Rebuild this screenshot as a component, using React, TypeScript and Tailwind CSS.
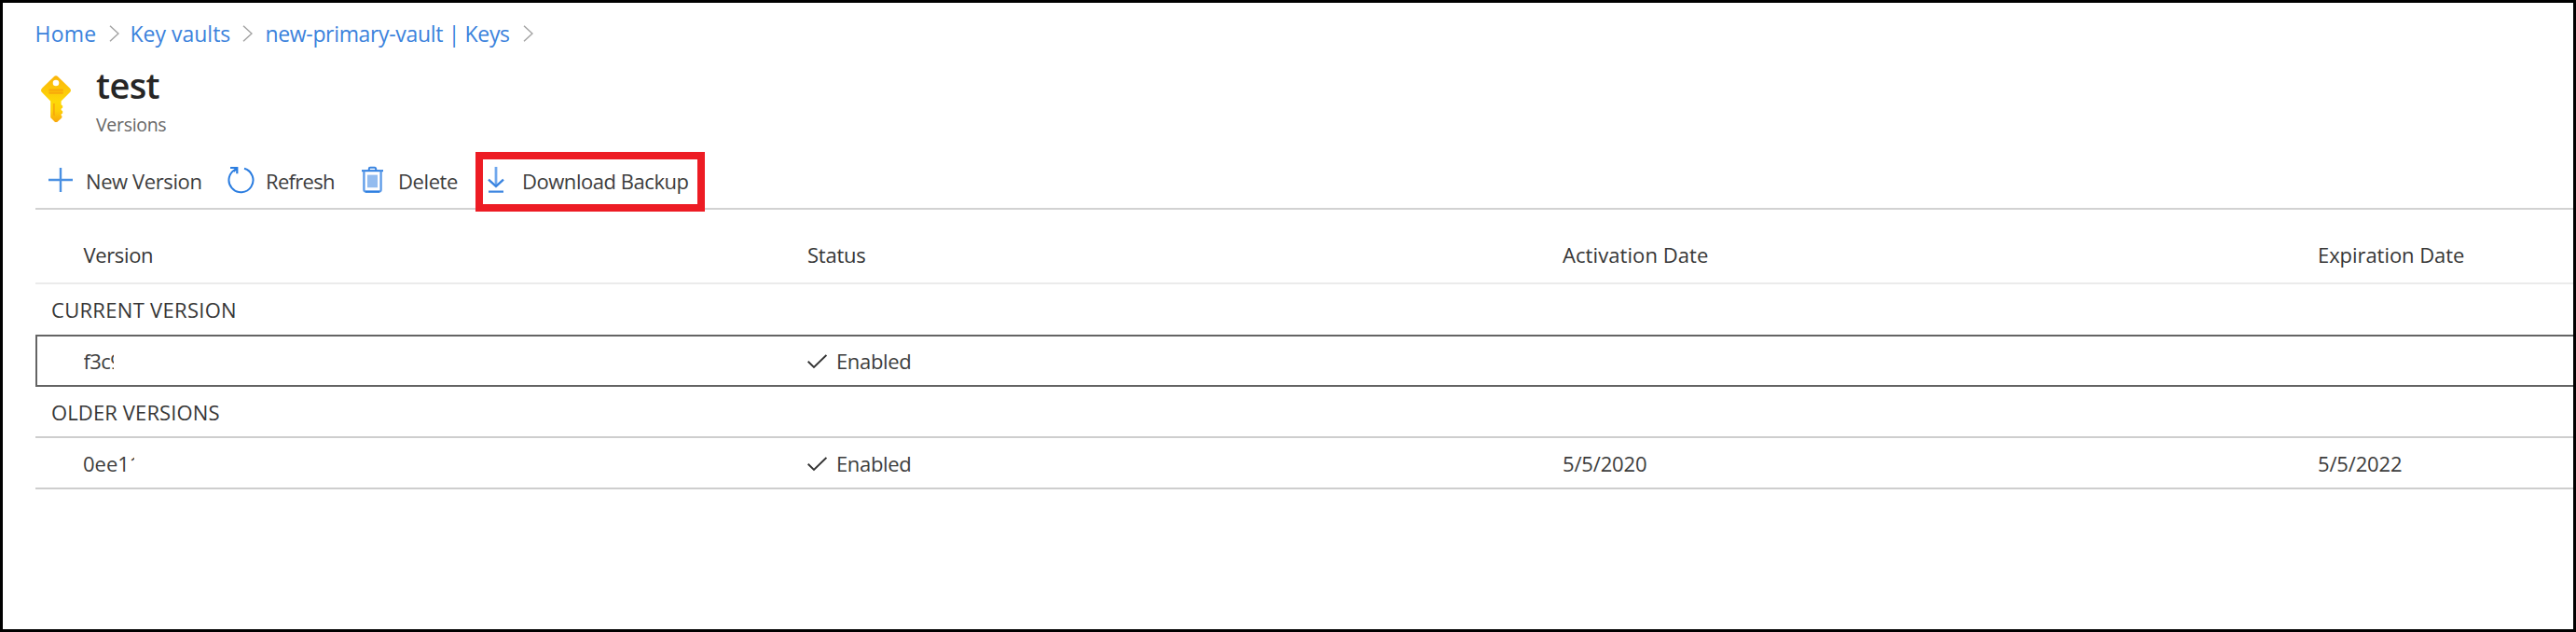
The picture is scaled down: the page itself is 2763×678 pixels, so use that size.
import type { ReactNode } from "react";

function Chevron({ className }: { className: string }) {
  return (
    <svg className={`h-[18px] w-[11px] shrink-0 ${className}`} viewBox="0 0 11 18" fill="none" stroke="#a3a3a3" strokeWidth="1.5">
      <path d="M1 .8 10 9 1 17.2" />
    </svg>
  );
}

function KeyIcon() {
  return (
    <svg className="h-[50px] w-[32px] shrink-0" viewBox="0 0 32 50">
      <defs>
        <linearGradient id="keyFill" x1="0" y1="0" x2="0" y2="1">
          <stop offset="0" stopColor="#fbb50a" />
          <stop offset=".55" stopColor="#fdd808" />
          <stop offset=".75" stopColor="#fdcf08" />
          <stop offset="1" stopColor="#f8a60c" />
        </linearGradient>
      </defs>
      <path
        fill="url(#keyFill)"
        d="M13.6 1.4a3.4 3.4 0 0 1 4.8 0L30.8 13.6a3.2 3.2 0 0 1 0 4.6L21.6 27.6v3.6l1.6 1.2v2.2l-1.6 1.2v1.2l1.6 1.2v2.2l-1.6 1.2v1.2l1 1-.4 1.8-5 4.4a1.6 1.6 0 0 1-2.2 0l-4.2-4.2a2 2 0 0 1-.6-1.4V27.6L1.2 18.2a3.2 3.2 0 0 1 0-4.6Z"
      />
      <circle cx="16" cy="8" r="3.3" fill="#fff" />
      <rect x="8.3" y="14.4" width="15.6" height="2.4" rx=".8" fill="#f8a90b" />
      <rect x="8.3" y="17.6" width="15.6" height="2.2" rx=".8" fill="#f8a90b" />
      <path d="M13.2 30v12.4l1.4 1.2V30Z" fill="#f5a10c" />
    </svg>
  );
}

function PlusIcon() {
  return (
    <svg className="h-[28px] w-[27px] shrink-0" viewBox="0 0 27 28" fill="none" stroke="#4a90e2" strokeWidth="2.4">
      <path d="M14 1v26M1 14h26" />
    </svg>
  );
}

function RefreshIcon() {
  return (
    <svg className="h-[30px] w-[29px] shrink-0" viewBox="0 0 29 30" fill="none" stroke="#2b7de0" strokeWidth="2">
      <path d="M18 2.7A13 13 0 1 1 9.3 3.3" />
      <path d="M3 2H10.3V8.3M10 2.4 6.6 6" strokeWidth="2.2" />
    </svg>
  );
}

function TrashIcon() {
  return (
    <svg className="h-[30px] w-[23px] shrink-0" viewBox="0 0 23 30" fill="none">
      <path d="M7.8 4.6V3.2A1.4 1.4 0 0 1 9.2 1.8h4.6a1.4 1.4 0 0 1 1.4 1.4v1.4" stroke="#3a84e0" strokeWidth="2" />
      <path d="M0 5.2H23" stroke="#2b7de0" strokeWidth="2" />
      <path d="M2.4 5.4V25.6a2 2 0 0 0 2 2H18.6a2 2 0 0 0 2-2V5.4" stroke="#5b9ae8" strokeWidth="2.3" />
      <path d="M4 27.6H19" stroke="#2b7de0" strokeWidth="2" />
      <rect x="6" y="9.6" width="11" height="13.6" fill="#93bcef" />
    </svg>
  );
}

function DownloadIcon() {
  return (
    <svg className="h-[30px] w-[18px] shrink-0" viewBox="0 0 18 30" fill="none" stroke="#3a84e0">
      <path d="M9 1V22" stroke="#6fa7ec" strokeWidth="2.8" />
      <path d="M1 14.6 9 21.8 17 14.6" strokeWidth="2.4" />
      <path d="M1 27.6H17" strokeWidth="2.2" />
    </svg>
  );
}

function Enabled() {
  return (
    <div className="flex items-center">
      <svg className="mr-[10px] h-[16px] w-[21px] shrink-0" viewBox="0 0 21 16" fill="none" stroke="#333" strokeWidth="1.9">
        <path d="M.7 7.8 7 14 20.4 1" />
      </svg>
      <span className="tracking-[-0.35px]">Enabled</span>
    </div>
  );
}

function Row({ children, className = "" }: { children: ReactNode; className?: string }) {
  return <div className={`grid grid-cols-[828px_810px_810px_1fr] items-center ${className}`}>{children}</div>;
}

export default function App() {
  return (
    <div className="flex h-[678px] w-[2763px] flex-col overflow-hidden border-[3px] border-black bg-white font-['Open_Sans','Noto_Sans',sans-serif] text-[22px] whitespace-nowrap text-[#3d3d3d]">
      <nav className="flex h-[65px] items-center pt-px pl-[34.5px] text-[23px] text-[#3b82dc]">
        <a className="w-[65px] tracking-[0.2px]">Home</a>
        <Chevron className="ml-[14px]" />
        <a className="ml-[12px] w-[107.5px]">Key vaults</a>
        <Chevron className="ml-[12.5px]" />
        <a className="ml-[14px] w-[263px] tracking-[-0.34px]">new-primary-vault | Keys</a>
        <Chevron className="ml-[13px]" />
      </nav>

      <header className="flex h-[83px] pl-[41px]">
        <div className="pt-[13px]">
          <KeyIcon />
        </div>
        <div className="ml-[27px]">
          <h1 className="h-[47px] text-[38px] leading-[47px] font-semibold tracking-[-0.64px] text-[#262626]">test</h1>
          <p className="pt-px text-[19.5px] leading-[36px] tracking-[-0.3px] text-[#666]">Versions</p>
        </div>
      </header>

      <div className="ml-[35px] flex flex-1 flex-col">
        <div className="mt-[14px] flex h-[60px] shrink-0 border-b-2 border-[#d2d2d2] pl-[13px]">
          <div className="flex h-[58px] w-[193px] items-center">
            <div className="-mt-[3px]"><PlusIcon /></div>
            <span className="ml-[14px] tracking-[-0.4px]">New Version</span>
          </div>
          <div className="flex h-[58px] w-[144px] items-center">
            <div className="-mt-[3px]"><RefreshIcon /></div>
            <span className="ml-[12px] tracking-[-0.69px]">Refresh</span>
          </div>
          <div className="flex h-[58px] w-[122px] items-center">
            <div className="-mt-[3px]"><TrashIcon /></div>
            <span className="ml-[16px] tracking-[-0.41px]">Delete</span>
          </div>
          <div className="relative -mt-[2px] flex h-[64px] w-[246px] items-center border-8 border-[#ed1c24] pl-[5px]">
            <div className="-mt-[5px]"><DownloadIcon /></div>
            <span className="-mt-[2px] ml-[19px] tracking-[-0.46px]">Download Backup</span>
          </div>
        </div>

        <Row className="h-[80px] shrink-0 border-b-2 border-[#ebebeb] pt-[18px] font-medium text-[#363636]">
          <span className="pl-[51.5px] tracking-[-0.37px]">Version</span>
          <span className="tracking-[-0.23px]">Status</span>
          <span className="tracking-[0.08px]">Activation Date</span>
          <span className="tracking-[-0.06px]">Expiration Date</span>
        </Row>

        <div className="flex h-[54px] shrink-0 items-center pl-[17px] tracking-[0.3px] text-[#363636]">CURRENT VERSION</div>
        <Row className="h-[56px] shrink-0 border-y-2 border-l-2 border-[#646464] pt-px">
          <span className="-ml-[2px] pl-[51.5px]">
            <span className="block w-[32.5px] overflow-hidden tracking-[-0.6px]">f3c9</span>
          </span>
          <div className="-ml-[2px]"><Enabled /></div>
        </Row>

        <div className="flex h-[55px] shrink-0 items-center border-b-2 border-[#cecece] pt-[2px] pl-[17px] tracking-[0.12px] text-[#363636]">OLDER VERSIONS</div>
        <Row className="h-[55px] shrink-0 border-b-2 border-[#cecece] pt-[2px]">
          <span className="pl-[51px]">
            <span className="block w-[55px] overflow-hidden">0ee11</span>
          </span>
          <Enabled />
          <span className="tracking-[-0.15px]">5/5/2020</span>
          <span className="tracking-[-0.15px]">5/5/2022</span>
        </Row>
      </div>
    </div>
  );
}
